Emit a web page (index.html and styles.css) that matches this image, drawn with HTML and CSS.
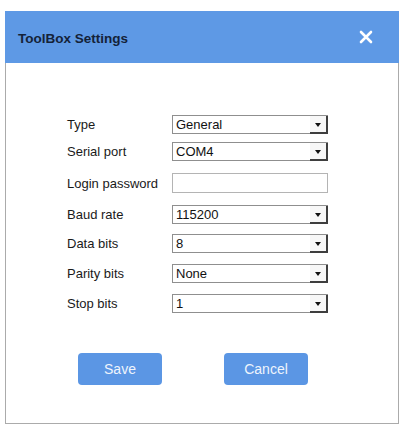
FILE: index.html
```html
<!DOCTYPE html>
<html>
<head>
<meta charset="utf-8">
<link rel="stylesheet" href="styles.css">
</head>
<body>
<div class="dialog">
  <div class="header">
    <span class="title">ToolBox Settings</span>
    <svg class="close" width="14" height="14" viewBox="0 0 14 14"><path d="M2 2 L12 12 M12 2 L2 12" stroke="#ffffff" stroke-width="2.6" stroke-linecap="round"/></svg>
  </div>
  <div class="body">
    <div class="form">
      <div class="row first"><span class="label">Type</span><div class="select"><span class="value">General</span><span class="arrow"><i></i></span></div></div>
      <div class="row"><span class="label">Serial port</span><div class="select"><span class="value">COM4</span><span class="arrow"><i></i></span></div></div>
      <div class="row login"><span class="label">Login password</span><div class="input"></div></div>
      <div class="row baud"><span class="label">Baud rate</span><div class="select"><span class="value">115200</span><span class="arrow"><i></i></span></div></div>
      <div class="row"><span class="label">Data bits</span><div class="select"><span class="value">8</span><span class="arrow"><i></i></span></div></div>
      <div class="row"><span class="label">Parity bits</span><div class="select"><span class="value">None</span><span class="arrow"><i></i></span></div></div>
      <div class="row"><span class="label">Stop bits</span><div class="select"><span class="value">1</span><span class="arrow"><i></i></span></div></div>
    </div>
    <div class="buttons">
      <div class="btn">Save</div>
      <div class="btn">Cancel</div>
    </div>
  </div>
</div>
</body>
</html>
```
FILE: styles.css
```css
html, body {
  margin: 0;
  padding: 0;
  background: #ffffff;
}
body {
  font-family: "Liberation Sans", Arial, sans-serif;
  font-size: 13px;
  color: #1a1a1a;
}
.dialog {
  margin: 11px 0 0 5px;
  width: 394px;
}
.header {
  height: 52px;
  background: #5e99e5;
  display: flex;
  align-items: center;
  justify-content: space-between;
  padding: 0 26px 0 13px;
}
.title {
  font-weight: bold;
  font-size: 13.5px;
  color: #142238;
  padding-top: 2px;
}
.close {
  display: block;
  margin-top: -1px;
}
.body {
  height: 361px;
  box-sizing: border-box;
  border: 1px solid #ababab;
  border-top: none;
  padding: 52px 0 0 61px;
}
.form {
  display: flex;
  flex-direction: column;
  gap: 11px;
}
.row {
  display: flex;
  align-items: center;
  height: 19px;
}
.row.first {
  margin-bottom: -3px;
}
.row.login {
  height: 20px;
  margin: 1px 0;
}
.row.baud {
  margin-bottom: -1px;
}
.label {
  width: 105px;
  flex: none;
}
.select {
  width: 156px;
  height: 19px;
  box-sizing: border-box;
  border: 1px solid #8f8f8f;
  display: flex;
  align-items: stretch;
  background: #fff;
}
.value {
  flex: 1;
  padding-left: 3px;
  line-height: 17px;
  color: #111;
}
.arrow {
  width: 16px;
  flex: none;
  margin: 0 -1px -1px 0;
  border-right: 2px solid #3e3e3e;
  border-bottom: 2px solid #3e3e3e;
  background: #f7f7f7;
  display: flex;
  align-items: center;
  justify-content: center;
}
.arrow i {
  display: block;
  width: 0;
  height: 0;
  border-left: 3.5px solid transparent;
  border-right: 3.5px solid transparent;
  border-top: 4px solid #111;
  margin-top: 1px;
}
.input {
  width: 156px;
  height: 20px;
  box-sizing: border-box;
  border: 1px solid #b4b4b4;
}
.buttons {
  display: flex;
  gap: 62px;
  margin: 40px 0 0 11px;
}
.btn {
  width: 84px;
  height: 32px;
  border-radius: 4px;
  background: #5b96e4;
  color: #eef4fc;
  font-size: 14px;
  display: flex;
  align-items: center;
  justify-content: center;
}
```
